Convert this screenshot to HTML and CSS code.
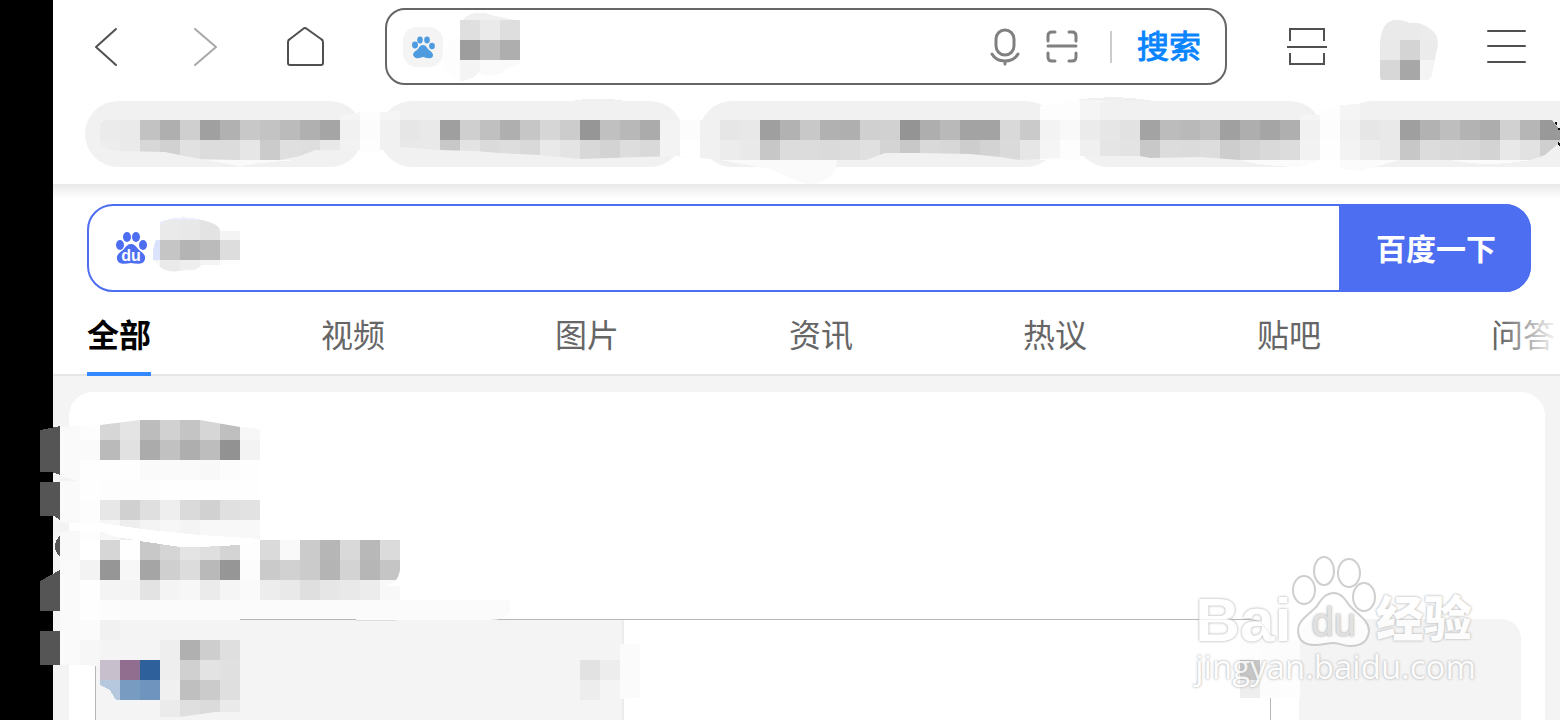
FILE: index.html
```html
<!DOCTYPE html>
<html lang="zh-CN">
<head>
    <meta charset="UTF-8">
    <meta name="viewport" content="width=device-width, initial-scale=1.0">
    <title>百度一下</title>
    <link rel="stylesheet" href="styles.css">
</head>
<body>

    <div class="page">
        <header class="header">
            <div class="toolbar">
                <button class="icon" aria-label="后退">
                    <svg viewBox="0 0 40 40"><path d="M31 2 11 20 31 38"/></svg>
                </button>
                <button class="icon disabled" aria-label="前进">
                    <svg viewBox="0 0 40 40"><path d="M10 2 31 20 10 38"/></svg>
                </button>
                <button class="icon" aria-label="主页">
                    <svg viewBox="0 0 40 40"><path d="M20 1Q21 1 22 2L36 12Q38 13 38 15V36Q38 38 36 38H5Q3 38 3 36V15Q3 13 5 12L18 2Q19 1 20 1Z"/></svg>
                </button>

                <form class="address">
                    <span class="site">
                        <svg viewBox="0 0 24 24">
                            <ellipse cx="4" cy="10" rx="3" ry="3.4"/>
                            <ellipse cx="9" cy="5" rx="2.8" ry="3.4"/>
                            <ellipse cx="16" cy="5" rx="2.8" ry="3.4"/>
                            <ellipse cx="21" cy="11" rx="2.9" ry="3.3"/>
                            <path d="M12 10C15 10 16 13 18 15C23 18 23 22 20 23C16 24 14 22 12 22C10 22 8 24 5 23C1 21 1 18 6 15C8 13 9 10 12 10Z"/>
                        </svg>
                    </span>
                    <input type="text" aria-label="网址">
                    <svg class="mosaic mosaicAddress" viewBox="440 10 90 74">
                        <path fill="#f0f0f0" d="M460 24Q464 14 476 13Q486 12 495 16L520 21V40H460Z"/>
                        <path fill="#fdfdfd" d="M460 36Q444 38 442 60Q448 78 460 80Z"/>
                        <path fill="#f4f4f4" d="M460 60H480V71Q472 81 460 81Z"/>
                        <path fill="#fafafa" d="M480 60H520V64Q506 68 502 73Q488 78 480 74Z"/>
                        <g class="cells" data-x="460" data-y="20" data-cells="dfeade|9dbeae"></g>
                    </svg>
                    <button type="button" class="tool" aria-label="语音">
                        <svg viewBox="0 0 32 40"><rect x="8" y="3" width="18" height="25" rx="9"/><path d="M4 27Q8 34 17 34Q26 34 30 27M17 34V37"/></svg>
                    </button>
                    <button type="button" class="tool" aria-label="扫一扫">
                        <svg viewBox="0 0 32 40"><path d="M2 14V9Q2 5 6 5H9M23 5H26Q30 5 30 9V14M2 19H30M2 26V30Q2 34 6 34H9M23 34H26Q30 34 30 30V26"/></svg>
                    </button>
                    <span class="divider"></span>
                    <button class="go">搜索</button>
                </form>

                <button class="icon" aria-label="截图">
                    <svg class="square" viewBox="0 0 40 40"><path d="M3 14V2H37V14M0 20H40M3 26V37H37V26"/></svg>
                </button>
                <button class="icon avatar" aria-label="头像">
                    <svg class="mosaic mosaicAvatar" viewBox="1378 18 62 64">
                        <clipPath id="avatarShape"><path d="M1380 42Q1382 20 1396 20Q1404 20 1410 23Q1422 21 1434 32Q1438 36 1438 44L1432 74Q1431 80 1426 80H1382Q1380 80 1380 76Z"/></clipPath>
                        <g class="cells" clip-path="url(#avatarShape)" data-x="1380" data-y="20" data-cells="eaeaec|e9d4eb|d7a7f4"></g>
                    </svg>
                </button>
                <button class="icon" aria-label="菜单">
                    <svg viewBox="0 0 40 40"><path d="M1 4H38M1 19H38M1 35H38"/></svg>
                </button>
            </div>

            <div class="links">
                <a class="pill pill1" href="#" aria-label="推荐一"></a>
                <a class="pill pill2" href="#" aria-label="推荐二"></a>
                <a class="pill pill3" href="#" aria-label="推荐三"></a>
                <a class="pill pill4" href="#" aria-label="推荐四"></a>
                <a class="pill pill5" href="#" aria-label="推荐五"></a>
                <svg class="mosaic mosaicLinks" viewBox="80 96 1480 92" preserveAspectRatio="xMinYMin slice">
                    <clipPath id="linksShape"><path d="M100 124L105 120H1552L1560 130V142L1545 155L1530 160H1400 1240L1200 157 1150 158 1140 156H1080L1060 158 1020 160 1000 157 970 154 920 153H885L866 160H720L700 158 680 156 640 157 580 159 540 155 500 153 475 151 440 150 400 147 380 150H315L300 156 280 160H240L200 159 165 152 120 151Q100 150 100 140Z"/></clipPath>
                    <path fill="#efefef" d="M571 101Q600 96 625 101ZM1075 100Q1115 94 1154 101H1100Z"/>
                    <path fill="#fafafa" d="M205 160H300Q270 161 240 166ZM720 160H837Q836 178 820 182Q808 187 795 180Q770 168 760 167Z"/>
                    <path fill="#f5f5f5" d="M340 116 360 112V120H340ZM380 112 400 111V120H380Z"/>
                    <path fill="#fdfdfd" d="M360 112H380V152H360ZM680 122H700V158H680ZM1040 106 1080 100V160H1040ZM1320 112 1340 104V160H1320Z"/>
                    <path fill="#fbfbfb" d="M1240 160H1320L1298 167Q1260 166 1240 160ZM1340 160H1400L1360 171 1340 169ZM1450 160H1530Q1490 168 1450 160Z"/>
                    <path fill="#f5f5f5" d="M1080 100H1100V120H1080ZM1300 115H1320V120H1300ZM1340 105 1360 104V120H1340Z"/>
                    <g class="cells" clip-path="url(#linksShape)" data-x="100" data-y="120"
                       data-cells="ebeac2afcfa0b1c8c3bbb0a5f1fcf1e6e99fcfc0afc6d6cc96c0b8abf3fcf1e6e89fb2c8b1afd0d194aeb9a3a3d9caf3f9ebe6e2a3bcb9bfa0aea5aff1fdf1e6e99fb2beb3add1b699|edead7d1e1dcdce6cbdfdee8f2fdf1e8e9c8e3daddd9e9e4d8d3ddd9f3fff1ece9c7dcdcdadce0d4c8d9d7cdd3dae6f5fdf0e5e3c8dcdbddcdd4d9dcf2fef3ede9c7dcd9d8d3e8e2cf"></g>
                    <path fill="#111" d="M1555 122H1557V125L1555 124ZM1558 128H1560V130H1558ZM1558 142 1560 144V147L1558 145Z"/>
                </svg>
            </div>
        </header>

        <main>
            <form class="search">
                <svg class="paw" viewBox="0 0 32 34">
                    <ellipse cx="5" cy="14" rx="4" ry="5"/>
                    <ellipse cx="12" cy="6" rx="4" ry="5"/>
                    <ellipse cx="21" cy="6" rx="4" ry="5"/>
                    <ellipse cx="28" cy="14" rx="4" ry="5"/>
                    <path d="M16 13C19 13 21 15 23 18C26 21 31 23 30 28C29 34 22 33 16 32C10 33 3 34 2 28C1 23 6 21 9 18C11 15 13 13 16 13Z"/>
                    <text x="16" y="30">du</text>
                </svg>
                <input type="text" aria-label="搜索词">
                <svg class="mosaic mosaicSearch" viewBox="150 214 92 60">
                    <path fill="#e9edfd" d="M160 222Q180 214 202 220L212 226H160Z"/>
                    <path fill="#dbe2fb" d="M156 240H160V260H153Q152 248 156 240Z"/>
                    <path fill="#f7f7f7" d="M153 260H160V266Z"/>
                    <clipPath id="searchShape"><path d="M160 224 168 220H202Q220 224 220 231H240V264L220 265 202 265Q196 272 185 270Q168 274 160 267Z"/></clipPath>
                    <g class="cells" clip-path="url(#searchShape)" data-x="160" data-y="220" data-cells="eae8e3f4|c5b4bbdd|eaeef4fc"></g>
                </svg>
                <button>百度一下</button>
            </form>

            <nav class="tabs">
                <a class="active" href="#">全部</a>
                <a href="#">视频</a>
                <a href="#">图片</a>
                <a href="#">资讯</a>
                <a href="#">热议</a>
                <a href="#">贴吧</a>
                <a href="#">问答</a>
            </nav>

            <section class="results">
                <div class="card">
                    <div class="summary"></div>
                    <div class="row">
                        <div class="panel"><div class="panelLeft"></div></div>
                        <div class="side"></div>
                    </div>
                </div>

                <svg class="mosaic mosaicResults" viewBox="40 416 660 304">
                    <path fill="#555" d="M40 430 60 426V475L52 472H40ZM40 482H60V520L54 516H40ZM60 535V557Q50 547 60 535ZM40 581 60 570V611H40ZM40 631H60V665H40Z"/>
                    <clipPath id="resultsShape"><path d="M60 427 100 425 140 420H200L240 427 260 429V540H400V570Q398 584 384 586H400V600H510V612Q505 620 490 620H240V640H60Z"/></clipPath>
                    <g class="cells" clip-path="url(#resultsShape)" data-x="60" data-y="420"
                       data-cells="fafdd6e4bcd1c4d6bff7|fafabae1abc1aebd92f3|fafefefefafafaf8fcfe|fafefdfdfdfefefefefe|fafde7d0dfeedad1e0e2|f9fdf7eef4f7f4f8f8f8|f9ffd6fec8d5e4dfd4fedaf9cbb6d9b8db|faf396f7a5cfdcb996fccad1cbb4d3b6c5|fafef4f4e3f4f7ebf5faede9dfe6e9ecf8|fafefcfbfbfbfbfbfbfbfbfbfbfbfbfbfbfbfbfbfbfbfb|fafbf1f4f4f4f4f4f4"></g>
                    <path fill="#fff" d="M69 523H100L150 530 200 535 260 539V541L240 545 200 547H180L140 541 112 536 100 531H69Z"/>
                    <path fill="#f3f3f3" d="M53 476H60L78 481H53ZM53 520 69 524V531L53 533Z"/>
                    <path fill="#fafafa" d="M60 631H80V665H60Z"/>
                    <path fill="#f7f7f7" d="M80 640H100V666L80 665Z"/>
                    <path fill="#b5b8b6" d="M240 619H356V620H240Z"/>
                    <path fill="#ddd" d="M356 620H396V621H356Z"/>
                    <path fill="#c7bfcc" d="M100 660H120V680H100Z"/>
                    <path fill="#916d90" d="M120 660H140V680H120Z"/>
                    <path fill="#2e609c" d="M140 660H160V680H140Z"/>
                    <path fill="#b5c8dd" d="M100 680H120V700H116L110 690 100 685Z"/>
                    <path fill="#789bc2" d="M120 680H140V700H120Z"/>
                    <path fill="#6f95bf" d="M140 680H160V700H140Z"/>
                    <clipPath id="nameShape"><path d="M160 640H240V712L215 712 180 717H160Z"/></clipPath>
                    <g class="cells" clip-path="url(#nameShape)" data-x="160" data-y="640" data-cells="eeb0cedf|eed0e3e0|f0bfcbdf|ebdfdbea"></g>
                    <g class="cells" data-x="580" data-y="660" data-cells="e2ed|edf4"></g>
                    <path fill="#fbfbfb" d="M620 644H640V698L620 699Z"/>
                </svg>

                <svg class="mosaic mosaicPrice" viewBox="1240 640 60 58">
                    <g class="cells" data-x="1240" data-y="640" data-cells="fdfcfc|c6fcfd|eefcfd"></g>
                </svg>

                <div class="watermark">
                    <div class="logo">
                        <span class="bai">Bai</span>
                        <span class="bigPaw">
                            <svg viewBox="0 0 84 90">
                                <ellipse cx="12" cy="34" rx="11" ry="14"/>
                                <ellipse cx="32" cy="15" rx="10" ry="14"/>
                                <ellipse cx="57" cy="17" rx="11" ry="14"/>
                                <ellipse cx="72" cy="41" rx="11" ry="14"/>
                                <path d="M42 37C50 37 54 45 58 50C65 58 77 64 77 75C76 86 68 90 58 90C51 90 47 87 41 87C35 87 30 89 23 89C12 89 6 84 6 74C6 64 17 59 25 50C29 44 33 37 42 37Z"/>
                            </svg>
                            <span class="du">du</span>
                        </span>
                        <span class="jingyan">经验</span>
                    </div>
                    <div class="domain">jingyan.baidu.com</div>
                </div>
            </section>
        </main>
    </div>

    <script src="script.js"></script>
</body>
</html>
```
FILE: styles.css
```css
*{
    box-sizing: border-box;
}

body{
    margin: 0;
    padding-left: 53px;
    min-height: 100vh;
    overflow: hidden;
    background-color: #000;
    font-family: "Noto Sans", "Noto Sans CJK SC", sans-serif;
}

button, input{
    padding: 0;
    border: none;
    background: none;
    font-family: inherit;
    outline: none;
}

button{
    cursor: pointer;
}

a{
    text-decoration: none;
}

.page{
    display: flex;
    flex-direction: column;
    min-height: 100vh;
    background-color: #fff;
}

/* Barra superior */
.header{
    position: relative;
    padding: 8px 0 17px;
    background-color: #fff;
}

.header::after{
    content: "";
    position: absolute;
    left: 0;
    right: 0;
    top: 100%;
    height: 14px;
    background: linear-gradient(#e9e9e9, #fff);
}

.toolbar{
    display: flex;
    align-items: center;
    gap: 60px;
    padding: 0 33px 0 32px;
}

.icon{
    flex: none;
    width: 40px;
    height: 40px;
}

.icon svg{
    display: block;
    width: 40px;
    height: 40px;
    fill: none;
    stroke: #505050;
    stroke-width: 2;
    stroke-linecap: round;
    stroke-linejoin: round;
}

.icon .square{
    stroke-linecap: butt;
    stroke-linejoin: miter;
}

.disabled svg{
    stroke: #a8a8a8;
}

.address{
    position: relative;
    flex: 1;
    min-width: 0;
    height: 77px;
    display: flex;
    align-items: center;
    padding: 0 24px 0 16px;
    border: 2px solid #666;
    border-radius: 20px;
}

.site{
    display: flex;
    align-items: center;
    justify-content: center;
    width: 40px;
    height: 40px;
    border-radius: 14px;
    background-color: #f4f4f4;
}

.site svg{
    width: 24px;
    height: 24px;
    fill: #4f9be0;
}

.address input{
    flex: 1;
    min-width: 0;
    height: 60px;
    padding: 0 16px;
    font-size: 30px;
}

.tool{
    width: 32px;
    height: 40px;
    margin-right: 26px;
}

.tool svg{
    display: block;
    width: 32px;
    height: 40px;
    fill: none;
    stroke: #808080;
    stroke-width: 3;
    stroke-linecap: round;
}

.divider{
    width: 2px;
    height: 32px;
    margin: 0 25px 0 6px;
    background-color: #ccc;
}

.go{
    font-size: 32px;
    line-height: 44px;
    padding-bottom: 2px;
    color: #0a84ff;
    -webkit-text-stroke: 1px #0a84ff;
}

.links{
    position: relative;
    display: flex;
    gap: 16px;
    margin-top: 16px;
    padding-left: 32px;
}

.pill{
    flex: none;
    height: 66px;
    border-radius: 33px;
    background-color: #f1f1f1;
}

.pill1{
    width: 278px;
}

.pill2{
    width: 304px;
}

.pill3{
    width: 360px;
}

.pill4{
    width: 248px;
}

.pill5{
    flex: 1;
    border-radius: 33px 0 0 33px;
}

/* Zonas pixeladas */
.icon .mosaic, .mosaic{
    position: absolute;
    stroke: none;
    pointer-events: none;
    shape-rendering: crispEdges;
}

.mosaicAddress{
    left: 53px;
    top: 0;
    width: 90px;
    height: 74px;
}

.avatar{
    position: relative;
}

.icon .mosaicAvatar{
    left: -9px;
    top: -9px;
    width: 62px;
    height: 64px;
}

.mosaicLinks{
    left: 27px;
    top: -5px;
    width: 1480px;
    height: 92px;
}

.mosaicSearch{
    left: 61px;
    top: 8px;
    width: 92px;
    height: 60px;
}

.mosaicResults{
    left: -13px;
    top: 40px;
    width: 660px;
    height: 304px;
}

.mosaicPrice{
    right: 260px;
    top: 264px;
    width: 60px;
    height: 58px;
}

main{
    flex: 1;
    display: flex;
    flex-direction: column;
    padding-top: 20px;
}

/* Buscador */
.search{
    position: relative;
    display: flex;
    align-items: center;
    height: 88px;
    margin: 0 29px 0 34px;
    padding-left: 26px;
    border: 2px solid #4e6ef2;
    border-radius: 26px;
}

.paw{
    width: 32px;
    height: 34px;
    fill: #4e6ef2;
}

.paw text{
    fill: #fff;
    font-family: "Liberation Sans", sans-serif;
    font-size: 16px;
    font-weight: bold;
    text-anchor: middle;
}

.search input{
    flex: 1;
    min-width: 0;
    height: 80px;
    padding: 0 12px;
    font-size: 30px;
}

.search button{
    width: 192px;
    height: 88px;
    margin-right: -2px;
    padding: 0 0 2px 2px;
    border-radius: 0 26px 26px 0;
    background-color: #4e6ef2;
    color: #fff;
    font-size: 30px;
    font-weight: bold;
}

.tabs{
    position: relative;
    flex: none;
    display: flex;
    gap: 170px;
    height: 84px;
    padding-left: 34px;
    border-bottom: 2px solid #e6e6e6;
}

.tabs a{
    flex: none;
    height: 84px;
    line-height: 86px;
    font-size: 32px;
    color: #666;
}

.tabs .active{
    border-bottom: 4px solid #3388ff;
    color: #000;
    font-weight: bold;
}

.tabs::after{
    content: "";
    position: absolute;
    top: 0;
    right: 0;
    width: 60px;
    height: 80px;
    background: linear-gradient(to right, rgba(255, 255, 255, 0), #fff);
}

/* Resultados */
.results{
    position: relative;
    flex: 1;
    display: flex;
    padding: 16px 15px 0 16px;
    background-color: #f4f4f4;
}

.card{
    flex: 1;
    display: flex;
    flex-direction: column;
    padding: 0 24px 0 26px;
    border-radius: 24px 24px 0 0;
    background-color: #fff;
}

.summary{
    height: 227px;
}

.row{
    flex: 1;
    display: flex;
    gap: 28px;
    min-height: 101px;
}

.panel{
    flex: 1;
    border: 1px solid #b5b8b6;
    border-bottom: none;
    border-radius: 0 22px 0 0;
}

.panelLeft{
    width: 45%;
    height: 100%;
    border-right: 2px solid #ececec;
    background-color: #f4f4f4;
}

.side{
    width: 222px;
    border-radius: 20px 20px 0 0;
    background-color: #f4f4f4;
}

.watermark{
    position: absolute;
    right: 84px;
    bottom: 32px;
    color: #fff;
    text-shadow: 0 0 2px #aaa, 0 0 3px #bbb;
    opacity: 0.8;
}

.logo{
    display: flex;
    align-items: flex-end;
    height: 92px;
}

.bai{
    font-family: "Liberation Sans", sans-serif;
    font-size: 62px;
    font-weight: bold;
    line-height: 52px;
}

.bigPaw{
    position: relative;
    width: 84px;
    height: 90px;
}

.bigPaw svg{
    display: block;
    width: 84px;
    height: 90px;
    fill: #fff;
    stroke: #c4c4c4;
    stroke-width: 2;
    overflow: visible;
}

.du{
    position: absolute;
    left: 0;
    right: 0;
    bottom: 2px;
    text-align: center;
    font-family: "Liberation Sans", sans-serif;
    font-size: 40px;
    line-height: 44px;
    color: #ddd;
}

.jingyan{
    font-size: 48px;
    font-weight: 900;
    line-height: 56px;
}

.domain{
    font-family: "Open Sans", sans-serif;
    font-size: 33px;
    line-height: 42px;
}
```
FILE: script.js
```js
// Cada celda son dos cifras hexadecimales de gris, las filas van separadas por |
var TAM = 20
var grupos = document.querySelectorAll(".cells")

grupos.forEach(grupo => {
    var x = Number(grupo.dataset.x)
    var y = Number(grupo.dataset.y)

    grupo.dataset.cells.split("|").forEach((fila, i) => {
        var celdas = fila.match(/[0-9a-f]{2}/g) || []
        celdas.forEach((gris, j) => {
            var rect = document.createElementNS("http://www.w3.org/2000/svg", "rect")
            rect.setAttribute("x", x + j * TAM)
            rect.setAttribute("y", y + i * TAM)
            rect.setAttribute("width", TAM)
            rect.setAttribute("height", TAM)
            rect.setAttribute("fill", "#" + gris + gris + gris)
            grupo.appendChild(rect)
        })
    })
})
```
